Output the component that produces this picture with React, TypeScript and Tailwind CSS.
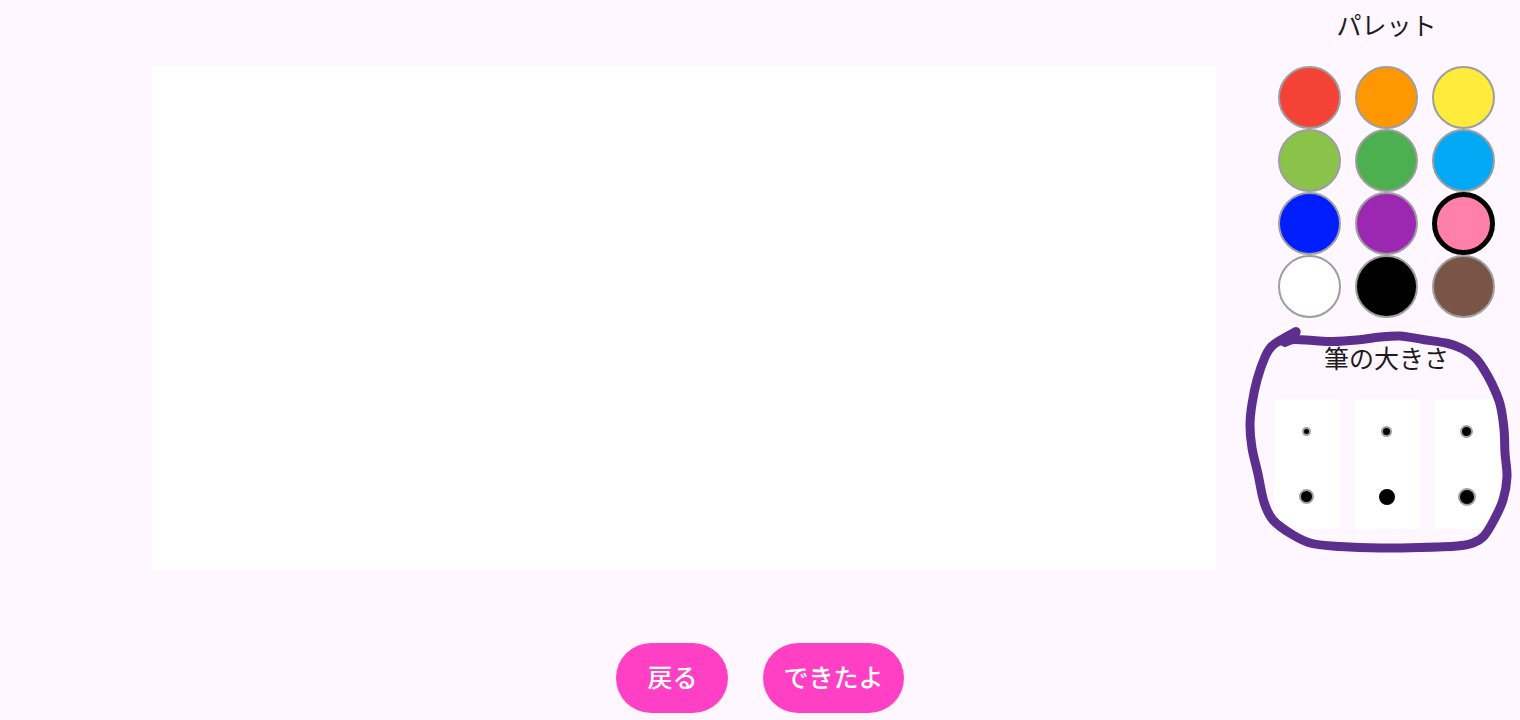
import { useState } from "react";

const COLORS = [
  { name: "赤", fill: "bg-[#f44336]" },
  { name: "オレンジ", fill: "bg-[#ff9800]" },
  { name: "黄色", fill: "bg-[#ffeb3b]" },
  { name: "黄緑", fill: "bg-[#8bc34a]" },
  { name: "緑", fill: "bg-[#4caf50]" },
  { name: "水色", fill: "bg-[#03a9f4]" },
  { name: "青", fill: "bg-[#001eff]" },
  { name: "紫", fill: "bg-[#9c27b0]" },
  { name: "ピンク", fill: "bg-[#ff80ab]" },
  { name: "白", fill: "bg-white" },
  { name: "黒", fill: "bg-black" },
  { name: "茶色", fill: "bg-[#795548]" },
];

const BRUSHES = [
  "size-[9px]",
  "size-[11px]",
  "size-[13px]",
  "size-[15px]",
  "size-[16px]",
  "size-[18px]",
];

const STROKE: [number, number][] = [
  [56, 11.5], [44, 18], [32, 26], [25, 37], [17, 60], [12, 84], [10, 105],
  [12, 128], [18, 154], [24, 182], [33, 200], [53, 215], [72, 223.5], [100, 226.5],
  [140, 228], [180, 227.5], [217, 226], [233, 223], [244, 216], [254, 200], [263, 180],
  [267, 157], [265, 133], [264, 109], [260, 84], [252, 64], [243, 48], [235, 37.5],
  [223, 29], [208, 23.5], [183, 19.5], [160, 16], [140, 17], [117, 20], [93, 21.5],
  [73, 20.5], [54, 19.5], [45, 22.5],
];

/** Smooth curve that passes through every point. */
function smoothPath(points: [number, number][]) {
  let d = `M${points[0][0]} ${points[0][1]}`;
  for (let i = 0; i < points.length - 1; i++) {
    const a = points[Math.max(i - 1, 0)];
    const b = points[i];
    const c = points[i + 1];
    const e = points[Math.min(i + 2, points.length - 1)];
    d += `C${b[0] + (c[0] - a[0]) / 6} ${b[1] + (c[1] - a[1]) / 6} ${
      c[0] - (e[0] - b[0]) / 6
    } ${c[1] - (e[1] - b[1]) / 6} ${c[0]} ${c[1]}`;
  }
  return d;
}

function Palette() {
  const [selected, setSelected] = useState(8);
  return (
    <section className="flex flex-col items-center">
      <h2 className="mb-[26px] text-[25px] leading-8">パレット</h2>
      <div className="grid grid-cols-3 gap-x-3.5">
        {COLORS.map((color, i) => (
          <button
            key={color.name}
            type="button"
            aria-label={color.name}
            aria-pressed={i === selected}
            onClick={() => setSelected(i)}
            className={`size-[63px] rounded-full ${color.fill} ${
              i === selected ? "border-5 border-black" : "border-2 border-[#9e9e9e]"
            }`}
          />
        ))}
      </div>
    </section>
  );
}

function BrushSizes() {
  const [selected, setSelected] = useState(4);
  return (
    <section className="relative flex flex-col items-center">
      <h2 className="mb-[26px] text-[25px] leading-8">筆の大きさ</h2>
      <div className="grid grid-cols-3 gap-x-3.5">
        {BRUSHES.map((size, i) => (
          <button
            key={size}
            type="button"
            aria-label={`筆 ${i + 1}`}
            aria-pressed={i === selected}
            onClick={() => setSelected(i)}
            className="flex h-[65px] w-[66px] items-center justify-center bg-white"
          >
            <span
              className={`${size} rounded-full border-2 bg-black ${
                i === selected ? "border-black" : "border-[#9e9e9e]"
              }`}
            />
          </button>
        ))}
      </div>
      <svg
        aria-hidden="true"
        viewBox="0 0 280 240"
        className="pointer-events-none absolute -top-[21px] -left-[13px] h-[240px] w-[280px]"
        fill="none"
        stroke="#5c2e8e"
        strokeWidth="9"
        strokeLinecap="round"
        strokeLinejoin="round"
      >
        <path d={smoothPath(STROKE)} />
        <path d="M56 12.500L46 19L40 21" />
      </svg>
    </section>
  );
}

export default function App() {
  return (
    <div className="flex min-h-screen flex-col bg-[#fef7ff] font-['Noto_Sans_CJK_JP','Noto_Sans',sans-serif] text-[#1d1b20]">
      <main className="flex items-start">
        <canvas
          aria-label="キャンバス"
          className="mt-[66px] ml-[10%] h-[70vh] w-[70%] bg-white"
        />
        <aside className="ml-auto flex w-[267px] flex-col gap-[23px] pt-2">
          <Palette />
          <BrushSizes />
        </aside>
      </main>
      <footer className="mt-auto flex justify-center gap-[35px] pb-[7px] text-[25px] font-medium text-white">
        <button type="button" className="h-[70px] min-w-28 rounded-full bg-[#ff40c4] px-5 pb-0.5">
          戻る
        </button>
        <button type="button" className="h-[70px] min-w-28 rounded-full bg-[#ff40c4] px-5 pb-0.5">
          できたよ
        </button>
      </footer>
    </div>
  );
}
